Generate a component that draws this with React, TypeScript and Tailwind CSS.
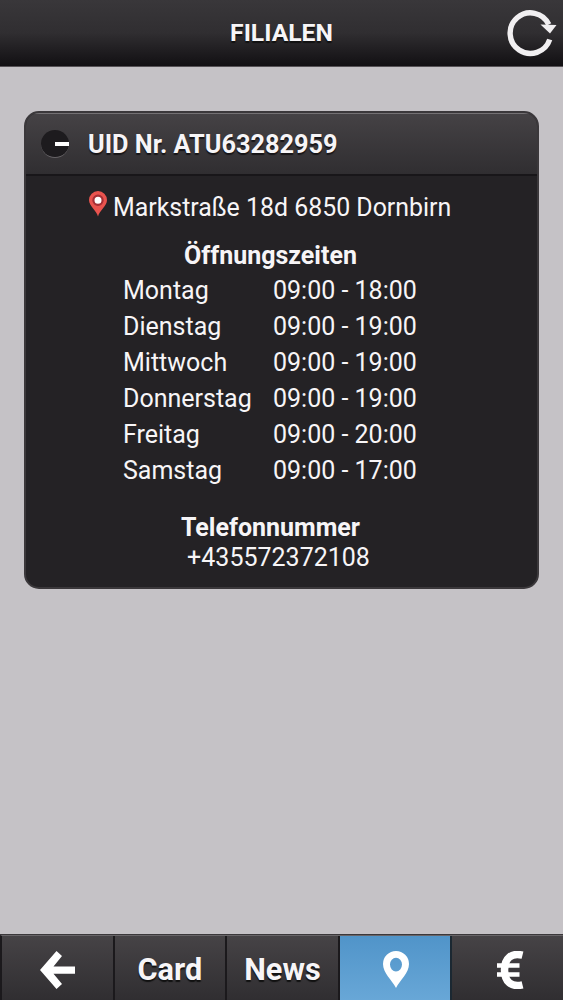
import React from 'react';

const HOURS = [
  { day: 'Montag', time: '09:00 - 18:00' },
  { day: 'Dienstag', time: '09:00 - 19:00' },
  { day: 'Mittwoch', time: '09:00 - 19:00' },
  { day: 'Donnerstag', time: '09:00 - 19:00' },
  { day: 'Freitag', time: '09:00 - 20:00' },
  { day: 'Samstag', time: '09:00 - 17:00' },
];

const TAB =
  'flex-1 flex items-center justify-center border-r-2 border-[#1b191c] text-[30.7px] leading-none font-bold [text-shadow:0_2px_1px_#111]';

const Header = () => (
  <header className="h-[67px] shrink-0 grid grid-cols-[60px_1fr_60px] items-center border-b border-[#565256] bg-linear-to-b from-[#39373a] via-[#302e31] to-[#121013]">
    <span />
    <h1 className="text-center text-[24.7px] leading-[30px] font-bold [text-shadow:0_2px_1px_#111]">FILIALEN</h1>
    <button aria-label="Aktualisieren" className="justify-self-end mr-[5px]">
      <svg width="52" height="52" viewBox="0 0 52 52" fill="none" className="block">
        <path d="M42.8 17.5A20.3 20.3 0 1 0 43.7 32.5" stroke="#f1eff1" strokeWidth="5.4" />
        <path d="M34.5 17.5L50.5 18L44 26.5Z" fill="#f1eff1" />
      </svg>
    </button>
  </header>
);

const BranchCard = () => (
  <section className="mt-[44px] ml-6 mr-6 h-[478px] rounded-[15px] overflow-hidden border-2 border-[#3b383b] bg-[#242225]">
    <div className="h-[63px] flex items-center border-t border-b-2 border-t-[#747174] border-b-[#181619] bg-linear-to-b from-[#454245] to-[#302e31]">
      <span className="ml-[15px] size-7 rounded-full bg-[#1d1b1e] border-b border-[#686568] flex items-center justify-end">
        <span className="w-[14px] h-[4px] bg-white" />
      </span>
      <h2 className="ml-[19px] pt-[2px] text-[25.3px] leading-[30px] font-bold [text-shadow:0_2px_1px_#171518]">UID Nr. ATU63282959</h2>
    </div>

    <div className="mt-[17px] ml-[63px] flex text-[24.9px] leading-[30px]">
      <svg width="18" height="27" viewBox="0 0 18 27" className="-mt-[2px] mr-[6px]">
        <path d="M9 25.5C7.5 19.5 0 15 0 9A9 9 0 0 1 18 9C18 15 10.5 19.5 9 25.5Z" fill="#e9534e" />
        <circle cx="9" cy="9.2" r="4.6" fill="#fff" stroke="#a52f35" strokeWidth="2.2" />
      </svg>
      <p>Markstraße 18d 6850 Dornbirn</p>
    </div>

    <h3 className="mt-[18px] pr-[22px] text-center text-[25px] leading-[30px] font-bold">Öffnungszeiten</h3>
    <dl className="ml-[97px] grid grid-cols-[150px_1fr] mt-[2px] text-[25px] leading-9">
      {HOURS.map(({ day, time }) => (
        <React.Fragment key={day}>
          <dt>{day}</dt>
          <dd className="whitespace-nowrap">{time}</dd>
        </React.Fragment>
      ))}
    </dl>

    <div className="mt-6 text-center leading-[30px]">
      <h3 className="pr-[22px] text-[25px] font-bold">Telefonnummer</h3>
      <p className="pr-[6px] text-[25px]">+435572372108</p>
    </div>
  </section>
);

const TabBar = () => (
  <nav className="mt-auto h-[66px] shrink-0 flex border-t border-[#3b383b] bg-[#242225]">
    <div className="flex flex-1 border-t border-l-2 border-t-[#686568] border-l-[#1b191c] bg-linear-to-b from-[#464346] to-[#302e31]">
      <button aria-label="Zurück" className={TAB}>
        <svg width="36" height="40" viewBox="0 0 36 40" className="mt-1">
          <path d="M1 20L17.5 1L23 6L14.5 16.5H36V23.8H14.5L23 34L17.5 39Z" fill="#fff" />
        </svg>
      </button>
      <button className={TAB}>
        <span className="pt-[5px]">Card</span>
      </button>
      <button className={TAB}>
        <span className="pt-[5px]">News</span>
      </button>
      <button aria-label="Filialen" className="flex-1 flex items-center justify-center border-r-2 border-[#1b2832] bg-linear-to-b from-[#5094c9] to-[#68a7d7]">
        <svg width="26" height="37" viewBox="0 0 26 37" className="mt-[3px] ml-[2px]">
          <path fillRule="evenodd" d="M13 37C9 29 0 22 0 13A13 13 0 0 1 26 13C26 22 17 29 13 37ZM13 6.8A6 6.8 0 1 0 13 20.4A6 6.8 0 1 0 13 6.8Z" fill="#fff" />
        </svg>
      </button>
      <button aria-label="Preise" className="flex-1 flex items-center justify-center">
        <svg width="28" height="38" viewBox="0 0 28 38" fill="none" stroke="#fff" className="mt-[4px] ml-1">
          <path d="M26.5 4.2C15.5 1.5 8.5 7 8.5 19C8.5 31 15.5 36.5 26.5 33.8" strokeWidth="7.5" />
          <path d="M1 14.5H23.5M1 23.5H23.5" strokeWidth="4.4" />
        </svg>
      </button>
    </div>
  </nav>
);

export default function App() {
  return (
    <div className="h-screen flex flex-col overflow-hidden bg-[#c5c2c6] text-[#f7f5f7] font-[Roboto,sans-serif]">
      <Header />
      <BranchCard />
      <TabBar />
    </div>
  );
}
